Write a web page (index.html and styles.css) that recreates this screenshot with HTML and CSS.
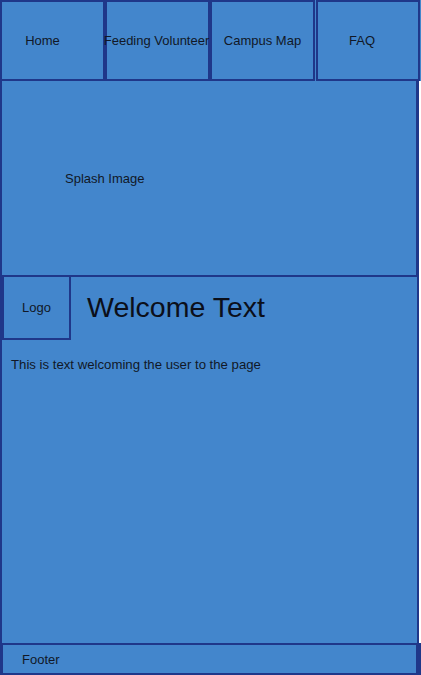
FILE: index.html
```html
<!DOCTYPE html>
<html>
<head>
<meta charset="utf-8">
<link rel="stylesheet" href="styles.css">
</head>
<body>
<nav class="nav">
  <div class="nav-item nav-home">Home</div>
  <div class="nav-item nav-feed">Feeding Volunteer</div>
  <div class="nav-item">Campus Map</div>
  <div class="nav-item nav-faq">FAQ</div>
</nav>
<main class="main">
  <section class="splash"><span class="splash-label">Splash Image</span></section>
  <section class="welcome">
    <div class="welcome-head">
      <div class="logo">Logo</div>
      <h1 class="welcome-title">Welcome Text</h1>
    </div>
    <p class="welcome-body">This is text welcoming the user to the page</p>
  </section>
</main>
<footer class="footer">Footer</footer>
</body>
</html>
```
FILE: styles.css
```css
* { box-sizing: border-box; }
html, body { margin: 0; padding: 0; background: #ffffff; }
body {
  width: 421px;
  height: 675px;
  overflow: hidden;
  font-family: "Liberation Sans", Arial, sans-serif;
  color: #111827;
}
.nav {
  display: grid;
  grid-template-columns: 105px 105px 105px 105px;
  column-gap: 0;
  height: 81px;
  background: #4386cc;
}
.nav-item {
  background: #4386cc;
  border: 2px solid #1f3789;
  display: flex;
  align-items: center;
  justify-content: center;
  font-size: 13px;
  white-space: nowrap;
  overflow: visible;
}
.nav-home { padding-right: 20px; }
.nav-feed { padding-right: 2px; }
.nav-faq { padding-right: 12px; margin-left: 1px; }
.main {
  width: 419px;
  height: 562px;
  background: #4386cc;
  border: 2px solid #1f3789;
  border-top: none;
  border-bottom: none;
  display: flex;
  flex-direction: column;
}
.splash {
  height: 196px;
  border-bottom: 2px solid #1f3789;
  border-right: 1px solid #1f3789;
  display: flex;
  align-items: center;
  padding-left: 63px;
  font-size: 13px;
}
.welcome { flex: 1; }
.welcome-head {
  display: flex;
  align-items: center;
}
.logo {
  width: 69px;
  height: 63px;
  border: 2px solid #1f3789;
  border-top: none;
  display: flex;
  align-items: center;
  justify-content: center;
  font-size: 13px;
}
.welcome-title {
  margin: 0 0 0 16px;
  padding-bottom: 2px;
  font-size: 28.5px;
  font-weight: normal;
  color: #0b0f1a;
}
.welcome-body {
  margin: 17px 0 0 9px;
  font-size: 13.2px;
}
.footer {
  height: 32px;
  background: #4386cc;
  border-style: solid;
  border-color: #1f3789;
  border-width: 2px 5px 2px 3px;
  display: flex;
  align-items: center;
  padding-left: 19px;
  font-size: 13px;
}
```
